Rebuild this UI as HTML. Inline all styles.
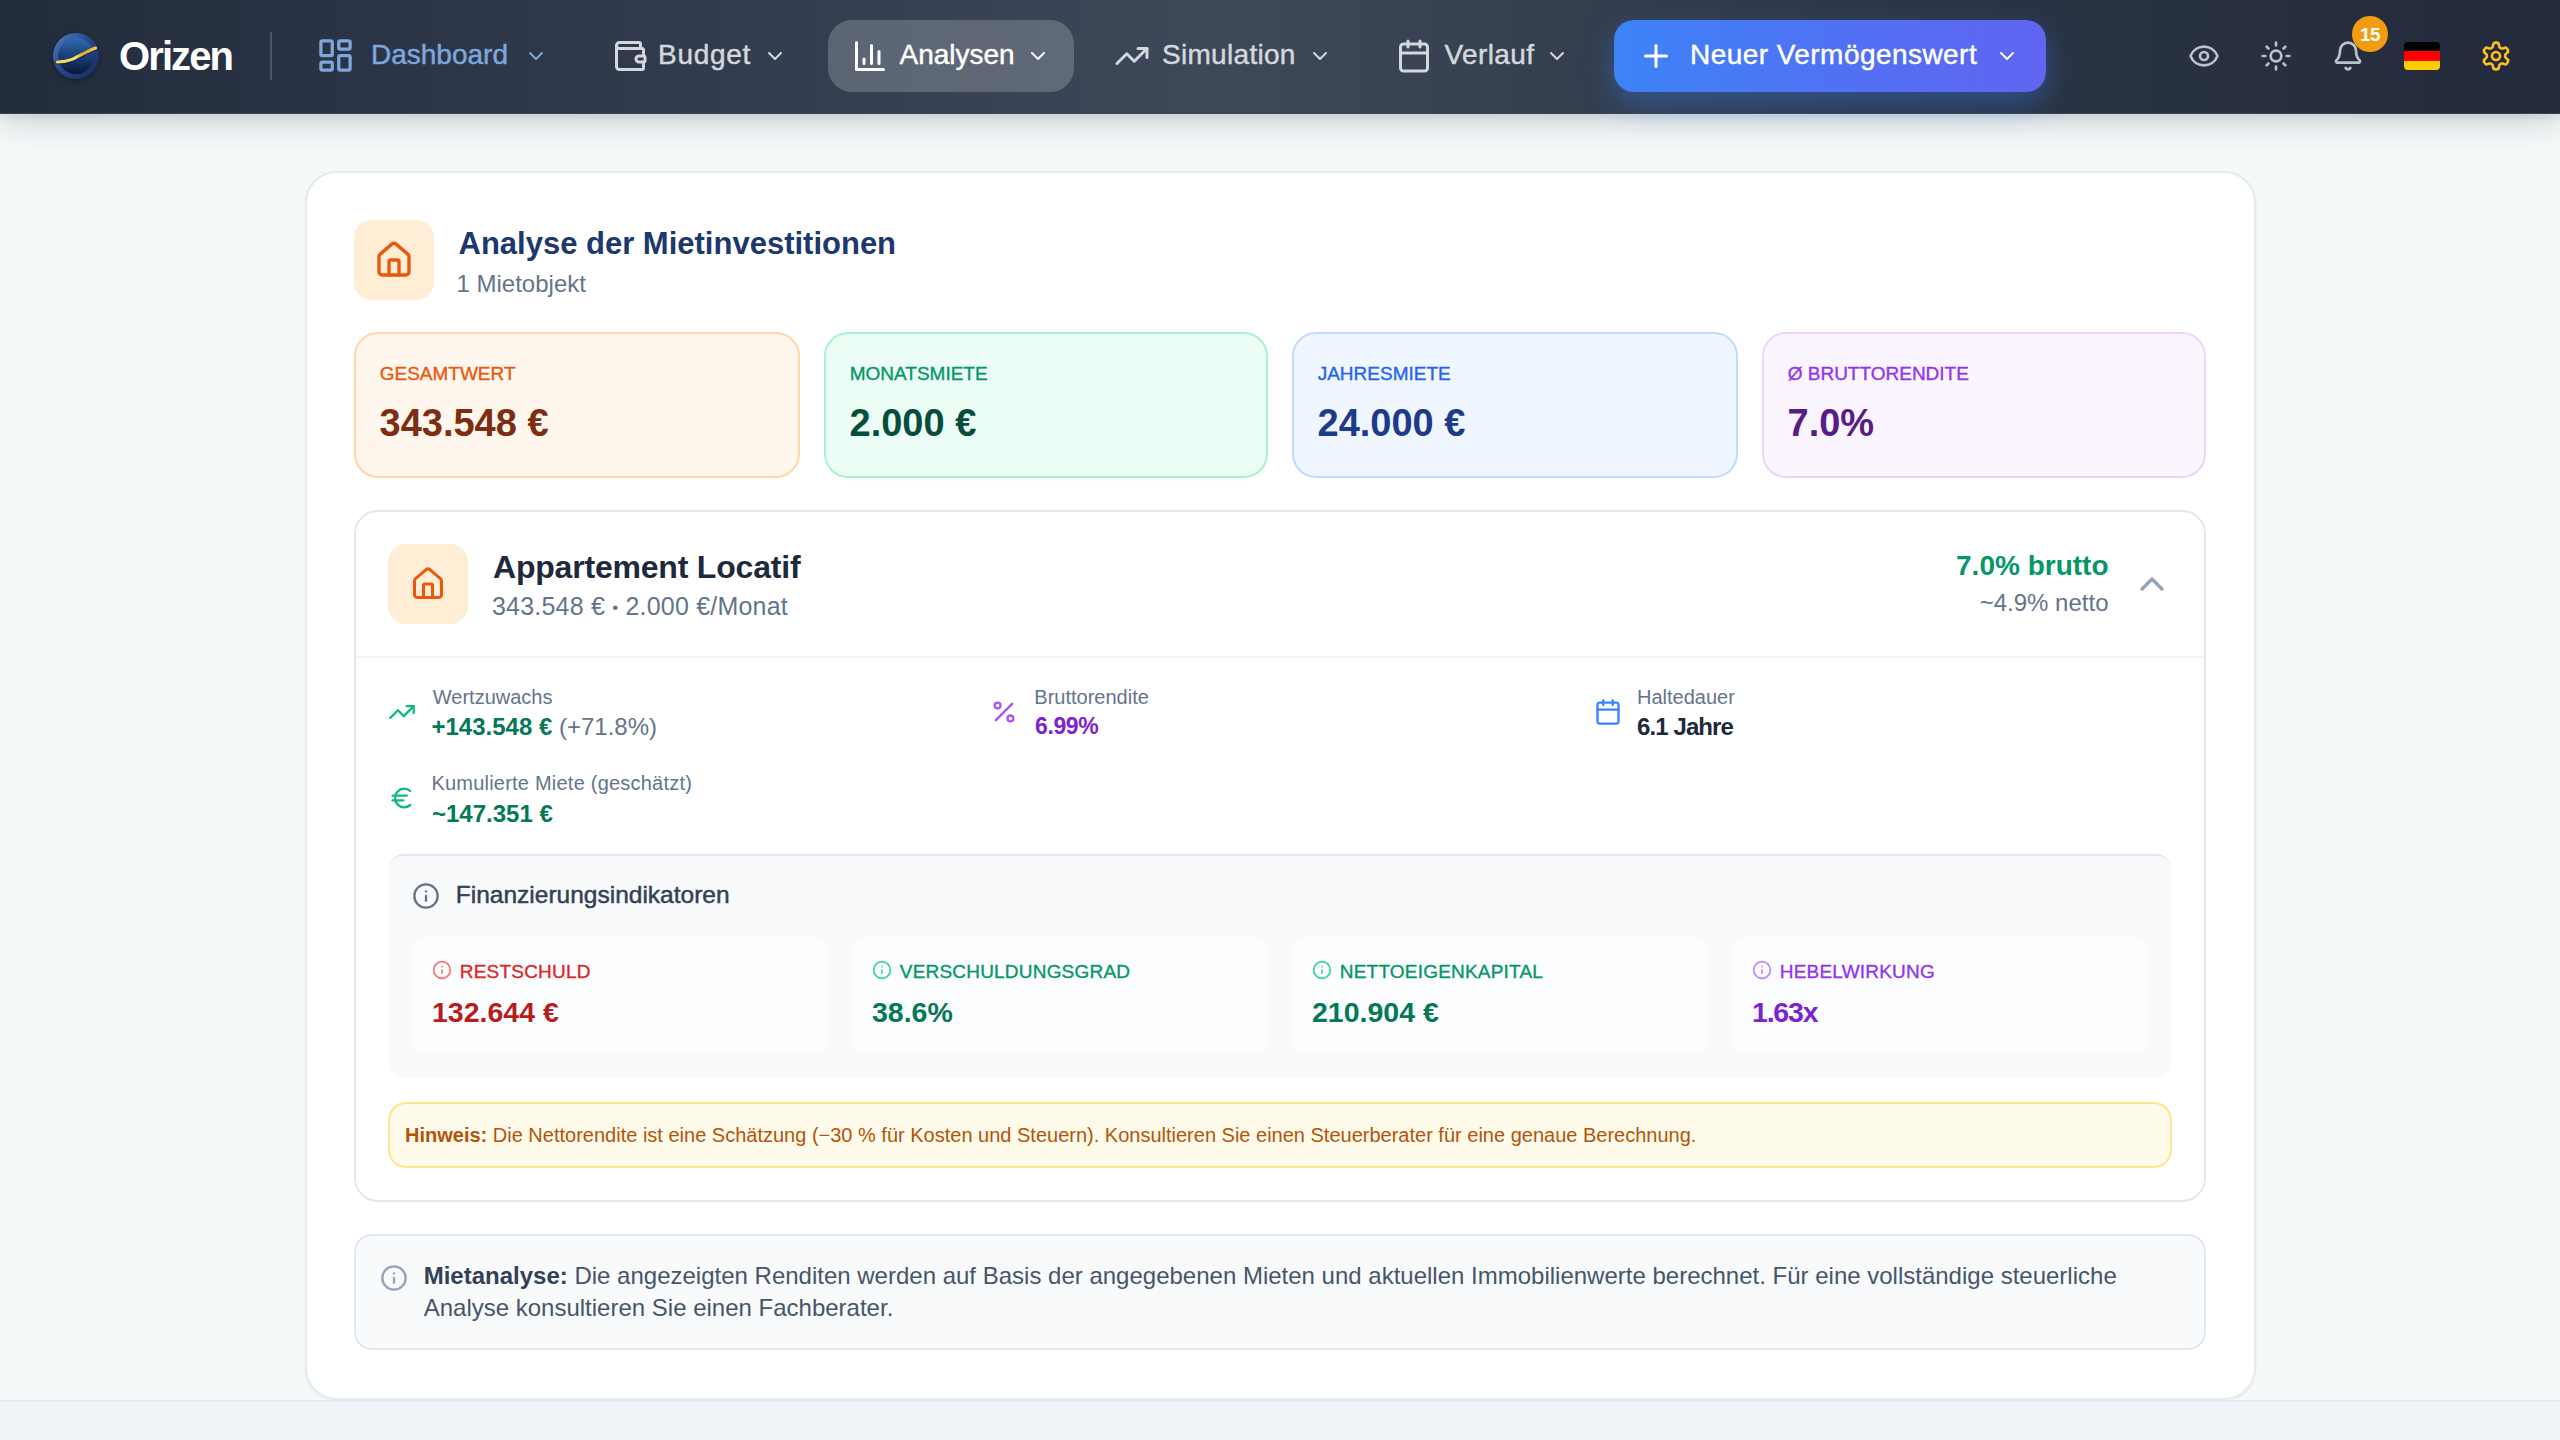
<!DOCTYPE html>
<html lang="de">
<head>
<meta charset="utf-8">
<title>Orizen – Analysen</title>
<style>
*{box-sizing:border-box;margin:0;padding:0}
html,body{width:2560px;height:1440px;overflow:hidden}
body{font-family:"Liberation Sans",sans-serif;background:#f4f9f9;position:relative;color:#1e293b}
svg{display:block}
.abs{position:absolute}
/* NAV */
.nav{position:absolute;left:0;top:0;width:2560px;height:114px;background:linear-gradient(90deg,#232c3d 0%,#323d4f 30%,#3d4859 48%,#2c3546 75%,#222a3b 100%);box-shadow:0 10px 30px rgba(30,41,59,.16),0 4px 8px rgba(30,41,59,.08);z-index:5;border-bottom:1px solid #3b4556}
.logo{position:absolute;left:53px;top:33px;width:46px;height:46px;border-radius:50%;background:radial-gradient(circle at 45% 35%,#2d64b0 0%,#1d4585 40%,#0f2a5c 75%,#0a1f45 100%);box-shadow:0 2px 6px rgba(0,0,0,.35), inset 0 0 0 5px rgba(40,80,150,.55)}
.brand{position:absolute;left:119px;top:30px;font-size:40px;font-weight:700;color:#fff;letter-spacing:-1.9px;line-height:52px}
.vdiv{position:absolute;left:270px;top:32px;width:2px;height:48px;background:#4a5566}
.tx{position:absolute;font-size:28px;line-height:1;white-space:nowrap;color:#d4d8de;-webkit-text-stroke:.45px currentColor}
.pill{background:rgba(255,255,255,.2);border-radius:24px}
.cta{position:absolute;left:1614px;top:20px;width:432px;height:72px;border-radius:20px;background:linear-gradient(90deg,#3d83f6 0%,#5170f3 55%,#6165f1 100%);box-shadow:0 12px 30px rgba(59,130,246,.38)}
.badge{position:absolute;left:2352px;top:16px;width:36px;height:36px;border-radius:50%;background:#f39c12;color:#fff;font-weight:700;font-size:19px;line-height:38.5px;text-align:center;letter-spacing:-.5px}
.flag{position:absolute;left:2404px;top:42px;width:36px;height:28px;border-radius:4px;overflow:hidden;background:linear-gradient(#000 0,#000 33.3%,#f00 33.3%,#f00 66.6%,#ffcc00 66.6%)}
/* MAIN */
.footer{position:absolute;left:0;top:1400px;width:2560px;height:40px;background:#f0f3f8;border-top:2px solid #e2e8f0;z-index:3}
.outer{position:absolute;left:305px;top:171px;width:1951px;height:1229px;background:#fff;border:2px solid #e8eaee;border-radius:32px;box-shadow:0 1px 3px rgba(0,0,0,.05)}

.t{position:absolute;line-height:1;white-space:nowrap}
.b{font-weight:700}
.ibox{position:absolute;background:#ffedd5;border-radius:18px}
.stat{position:absolute;top:332px;width:445px;height:146px;border:2px solid;border-radius:24px}
.lbl{font-size:19px;letter-spacing:0px;-webkit-text-stroke:.35px currentColor}
.val{font-size:38px;font-weight:700}
.prop{position:absolute;left:354px;top:510px;width:1852px;height:692px;border:2px solid #e2e8f0;border-radius:24px;background:#fff}
.hr{position:absolute;left:356px;top:656px;width:1848px;height:2px;background:#f1f5f9}
.sl{font-size:20px;color:#64748b}
.sv{font-size:24px;font-weight:700}
.fin{position:absolute;left:388px;top:854px;width:1784px;height:224px;background:#f8fafc;border-top:2px solid #e2e8f0;border-radius:16px}
.sub{position:absolute;top:936px;width:416px;height:118px;background:#fcfdfe;border-radius:16px}
.hint{position:absolute;left:388px;top:1102px;width:1784px;height:66px;background:#fffbeb;border:2px solid #fde68a;border-radius:18px}
.note{position:absolute;left:354px;top:1234px;width:1852px;height:116px;background:#f8fafc;border:2px solid #e2e8f0;border-radius:18px}
</style>
</head>
<body>
<div class="nav">
  <svg class="abs" style="left:53px;top:33px;filter:drop-shadow(0 2px 3px rgba(0,0,0,.35))" width="46" height="46" viewBox="0 0 46 46">
    <defs>
      <linearGradient id="lgR" x1="0" y1="0" x2="1" y2="1"><stop offset="0" stop-color="#5282c2"/><stop offset=".45" stop-color="#26498c"/><stop offset="1" stop-color="#172a5e"/></linearGradient>
      <linearGradient id="lgI" x1="0" y1="0" x2="0" y2="1"><stop offset="0" stop-color="#2f6bb0"/><stop offset=".5" stop-color="#1a3f7a"/><stop offset="1" stop-color="#0a1837"/></linearGradient>
      <linearGradient id="lgG" x1="0" y1="0" x2="1" y2="0"><stop offset="0" stop-color="#f6d44c"/><stop offset=".45" stop-color="#f7e070"/><stop offset=".7" stop-color="#e2a524"/><stop offset="1" stop-color="#f3cf45"/></linearGradient>
    </defs>
    <circle cx="23" cy="23" r="23" fill="url(#lgR)"/>
    <circle cx="23" cy="23" r="18" fill="url(#lgI)"/>
    <path d="M4.4 29.5 C9 29.5 14 29 19 27 C26 24 34.5 18.5 42.6 15.5" fill="none" stroke="#06122e" stroke-opacity=".5" stroke-width="4.2" stroke-linecap="round"/>
    <path d="M4.4 29 C9 29 14 28.4 19 26.4 C26 23.4 34.5 17.9 42.6 15" fill="none" stroke="url(#lgG)" stroke-width="3.1" stroke-linecap="round"/>
  </svg>
  <div class="brand">Orizen</div>
  <div class="vdiv"></div>

  <!-- Dashboard -->
  <svg class="abs" style="left:316px;top:36.3px" width="39" height="39" viewBox="0 0 24 24" fill="none" stroke="#7ea7dc" stroke-width="2" stroke-linecap="round" stroke-linejoin="round"><rect width="7" height="9" x="3" y="3" rx="1"/><rect width="7" height="5" x="14" y="3" rx="1"/><rect width="7" height="9" x="14" y="12" rx="1"/><rect width="7" height="5" x="3" y="16" rx="1"/></svg>
  <div class="tx" style="left:371px;top:41px;color:#7ea7dc">Dashboard</div>
  <svg class="abs chev" style="left:523.5px;top:43.5px" width="24" height="24" viewBox="0 0 24 24" fill="none" stroke="#7ea7dc" stroke-width="2" stroke-linecap="round" stroke-linejoin="round"><path d="m6 9 6 6 6-6"/></svg>
  <!-- Budget -->
  <svg class="abs" style="left:612px;top:38px" width="36" height="36" viewBox="0 0 24 24" fill="none" stroke="#d4d8de" stroke-width="2" stroke-linecap="round" stroke-linejoin="round"><path d="M19 7V4a1 1 0 0 0-1-1H5a2 2 0 0 0 0 4h15a1 1 0 0 1 1 1v4h-3a2 2 0 0 0 0 4h3a1 1 0 0 0 1-1v-2a1 1 0 0 0-1-1"/><path d="M3 5v14a2 2 0 0 0 2 2h15a1 1 0 0 0 1-1v-4"/></svg>
  <div class="tx" style="left:658px;top:41px;letter-spacing:.7px">Budget</div>
  <svg class="abs chev" style="left:763px;top:43.5px" width="24" height="24" viewBox="0 0 24 24" fill="none" stroke="#d4d8de" stroke-width="2" stroke-linecap="round" stroke-linejoin="round"><path d="m6 9 6 6 6-6"/></svg>
  <!-- Analysen -->
  <div class="abs pill" style="left:828px;top:20px;width:246px;height:72px"></div>
  <svg class="abs" style="left:852px;top:38px" width="36" height="36" viewBox="0 0 24 24" fill="none" stroke="#fff" stroke-width="2" stroke-linecap="round" stroke-linejoin="round"><path d="M3 3v18h18"/><path d="M18 17V9"/><path d="M13 17V5"/><path d="M8 17v-3"/></svg>
  <div class="tx" style="left:899.5px;top:41px;color:#fff">Analysen</div>
  <svg class="abs chev" style="left:1026px;top:43.5px" width="24" height="24" viewBox="0 0 24 24" fill="none" stroke="#fff" stroke-width="2" stroke-linecap="round" stroke-linejoin="round"><path d="m6 9 6 6 6-6"/></svg>
  <!-- Simulation -->
  <svg class="abs" style="left:1114px;top:38px" width="36" height="36" viewBox="0 0 24 24" fill="none" stroke="#d4d8de" stroke-width="2" stroke-linecap="round" stroke-linejoin="round"><path d="M22 7 13.5 15.5 8.5 10.5 2 17"/><path d="M16 7h6v6"/></svg>
  <div class="tx" style="left:1162px;top:41px;letter-spacing:.3px">Simulation</div>
  <svg class="abs chev" style="left:1308px;top:43.5px" width="24" height="24" viewBox="0 0 24 24" fill="none" stroke="#d4d8de" stroke-width="2" stroke-linecap="round" stroke-linejoin="round"><path d="m6 9 6 6 6-6"/></svg>
  <!-- Verlauf -->
  <svg class="abs" style="left:1396px;top:38px" width="36" height="36" viewBox="0 0 24 24" fill="none" stroke="#d4d8de" stroke-width="2" stroke-linecap="round" stroke-linejoin="round"><path d="M8 2v4"/><path d="M16 2v4"/><rect width="18" height="18" x="3" y="4" rx="2"/><path d="M3 10h18"/></svg>
  <div class="tx" style="left:1444.5px;top:41px;letter-spacing:.4px">Verlauf</div>
  <svg class="abs chev" style="left:1545px;top:43.5px" width="24" height="24" viewBox="0 0 24 24" fill="none" stroke="#d4d8de" stroke-width="2" stroke-linecap="round" stroke-linejoin="round"><path d="m6 9 6 6 6-6"/></svg>
  <!-- CTA -->
  <div class="cta"></div>
  <svg class="abs" style="left:1638px;top:38px" width="36" height="36" viewBox="0 0 24 24" fill="none" stroke="#fff" stroke-width="2" stroke-linecap="round" stroke-linejoin="round"><path d="M5 12h14"/><path d="M12 5v14"/></svg>
  <div class="tx" style="left:1690px;top:41px;color:#fff;letter-spacing:.45px">Neuer Vermögenswert</div>
  <svg class="abs chev" style="left:1995px;top:43.5px" width="24" height="24" viewBox="0 0 24 24" fill="none" stroke="#fff" stroke-width="2" stroke-linecap="round" stroke-linejoin="round"><path d="m6 9 6 6 6-6"/></svg>
  <!-- right icons -->
  <svg class="abs" style="left:2188px;top:40px" width="32" height="32" viewBox="0 0 24 24" fill="none" stroke="#bcc2cb" stroke-width="2" stroke-linecap="round" stroke-linejoin="round"><path d="M2.062 12.348a1 1 0 0 1 0-.696 10.75 10.75 0 0 1 19.876 0 1 1 0 0 1 0 .696 10.75 10.75 0 0 1-19.876 0"/><circle cx="12" cy="12" r="3"/></svg>
  <svg class="abs" style="left:2260px;top:40px" width="32" height="32" viewBox="0 0 24 24" fill="none" stroke="#bcc2cb" stroke-width="2" stroke-linecap="round" stroke-linejoin="round"><circle cx="12" cy="12" r="4"/><path d="M12 2v2"/><path d="M12 20v2"/><path d="m4.93 4.93 1.41 1.41"/><path d="m17.66 17.66 1.41 1.41"/><path d="M2 12h2"/><path d="M20 12h2"/><path d="m6.34 17.66-1.41 1.41"/><path d="m19.07 4.93-1.41 1.41"/></svg>
  <svg class="abs" style="left:2332px;top:40px" width="32" height="32" viewBox="0 0 24 24" fill="none" stroke="#bcc2cb" stroke-width="2" stroke-linecap="round" stroke-linejoin="round"><path d="M10.268 21a2 2 0 0 0 3.464 0"/><path d="M3.262 15.326A1 1 0 0 0 4 17h16a1 1 0 0 0 .74-1.673C19.41 13.956 18 12.499 18 8A6 6 0 0 0 6 8c0 4.499-1.411 5.956-2.738 7.326"/></svg>
  <div class="badge">15</div>
  <div class="flag"></div>
  <svg class="abs" style="left:2480px;top:40px" width="32" height="32" viewBox="0 0 24 24" fill="none" stroke="#fbbf24" stroke-width="2" stroke-linecap="round" stroke-linejoin="round"><path d="M12.22 2h-.44a2 2 0 0 0-2 2v.18a2 2 0 0 1-1 1.73l-.43.25a2 2 0 0 1-2 0l-.15-.08a2 2 0 0 0-2.73.73l-.22.38a2 2 0 0 0 .73 2.73l.15.1a2 2 0 0 1 1 1.72v.51a2 2 0 0 1-1 1.74l-.15.09a2 2 0 0 0-.73 2.73l.22.38a2 2 0 0 0 2.73.73l.15-.08a2 2 0 0 1 2 0l.43.25a2 2 0 0 1 1 1.73V20a2 2 0 0 0 2 2h.44a2 2 0 0 0 2-2v-.18a2 2 0 0 1 1-1.73l.43-.25a2 2 0 0 1 2 0l.15.08a2 2 0 0 0 2.73-.73l.22-.39a2 2 0 0 0-.73-2.73l-.15-.08a2 2 0 0 1-1-1.74v-.5a2 2 0 0 1 1-1.74l.15-.09a2 2 0 0 0 .73-2.73l-.22-.38a2 2 0 0 0-2.73-.73l-.15.08a2 2 0 0 1-2 0l-.43-.25a2 2 0 0 1-1-1.73V4a2 2 0 0 0-2-2z"/><circle cx="12" cy="12" r="3"/></svg>
</div>

<div class="outer"></div>
<!-- header -->
<div class="ibox" style="left:354px;top:220px;width:80px;height:80px"></div>
<svg class="abs" style="left:374px;top:240px" width="40" height="40" viewBox="0 0 24 24" fill="none" stroke="#ea580c" stroke-width="2" stroke-linecap="round" stroke-linejoin="round"><path d="M15 21v-8a1 1 0 0 0-1-1h-4a1 1 0 0 0-1 1v8"/><path d="M3 10a2 2 0 0 1 .709-1.528l7-5.999a2 2 0 0 1 2.582 0l7 5.999A2 2 0 0 1 21 10v9a2 2 0 0 1-2 2H5a2 2 0 0 1-2-2z"/></svg>
<div class="t b" style="left:458.5px;top:228.2px;font-size:31px;color:#1c386c">Analyse der Mietinvestitionen</div>
<div class="t" style="left:456.5px;top:271.5px;font-size:24px;color:#64748b">1 Mietobjekt</div>
<!-- stats -->
<div class="stat" style="left:354px;width:446px;background:#fff7ed;border-color:#fed7aa"></div>
<div class="t lbl" style="left:379.7px;top:363.5px;color:#ea580c">GESAMTWERT</div>
<div class="t val" style="left:379.5px;top:404.4px;color:#7c2d12">343.548 €</div>
<div class="stat" style="left:824px;width:444px;background:#ecfdf5;border-color:#a7f3d0"></div>
<div class="t lbl" style="left:849.7px;top:363.5px;color:#059669">MONATSMIETE</div>
<div class="t val" style="left:849.5px;top:404.4px;color:#064e3b">2.000 €</div>
<div class="stat" style="left:1292px;width:446px;background:#eff6ff;border-color:#bfdbfe"></div>
<div class="t lbl" style="left:1317.7px;top:363.5px;color:#2563eb">JAHRESMIETE</div>
<div class="t val" style="left:1317.5px;top:404.4px;color:#1e3a8a">24.000 €</div>
<div class="stat" style="left:1762px;width:444px;background:#faf5ff;border-color:#e9d5ff"></div>
<div class="t lbl" style="left:1787.7px;top:363.5px;color:#9333ea">Ø BRUTTORENDITE</div>
<div class="t val" style="left:1787.5px;top:404.4px;color:#581c87">7.0%</div>
<!-- property card -->
<div class="prop"></div>
<div class="ibox" style="left:388px;top:544px;width:80px;height:80px"></div>
<svg class="abs" style="left:410px;top:566px" width="36" height="36" viewBox="0 0 24 24" fill="none" stroke="#ea580c" stroke-width="2" stroke-linecap="round" stroke-linejoin="round"><path d="M15 21v-8a1 1 0 0 0-1-1h-4a1 1 0 0 0-1 1v8"/><path d="M3 10a2 2 0 0 1 .709-1.528l7-5.999a2 2 0 0 1 2.582 0l7 5.999A2 2 0 0 1 21 10v9a2 2 0 0 1-2 2H5a2 2 0 0 1-2-2z"/></svg>
<div class="t b" style="left:493px;top:551px;font-size:32px;color:#1e293b;letter-spacing:-.2px">Appartement Locatif</div>
<div class="t" style="left:492px;top:594.4px;font-size:25px;letter-spacing:.2px;color:#64748b">343.548 € <span style="font-size:17px;position:relative;top:-2px">•</span> 2.000 €/Monat</div>
<div class="t b" style="right:451.5px;top:552.3px;font-size:28px;color:#059669">7.0% brutto</div>
<div class="t" style="right:451.5px;top:591.3px;font-size:24px;color:#64748b">~4.9% netto</div>
<svg class="abs" style="left:2132px;top:564px" width="40" height="40" viewBox="0 0 24 24" fill="none" stroke="#94a3b8" stroke-width="2" stroke-linecap="round" stroke-linejoin="round"><path d="m18 15-6-6-6 6"/></svg>
<div class="hr"></div>
<!-- details -->
<svg class="abs" style="left:388px;top:698px" width="28" height="28" viewBox="0 0 24 24" fill="none" stroke="#10b981" stroke-width="2" stroke-linecap="round" stroke-linejoin="round"><path d="M22 7 13.5 15.5 8.5 10.5 2 17"/><path d="M16 7h6v6"/></svg>
<div class="t sl" style="left:432.8px;top:686.8px">Wertzuwachs</div>
<div class="t sv" style="left:431.5px;top:715.3px;color:#047857">+143.548 € <span style="font-weight:400;color:#64748b">(+71.8%)</span></div>
<svg class="abs" style="left:990px;top:698px" width="28" height="28" viewBox="0 0 24 24" fill="none" stroke="#a855f7" stroke-width="2" stroke-linecap="round" stroke-linejoin="round"><line x1="19" x2="5" y1="5" y2="19"/><circle cx="6.5" cy="6.5" r="2.5"/><circle cx="17.5" cy="17.5" r="2.5"/></svg>
<div class="t sl" style="left:1034.3px;top:686.8px">Bruttorendite</div>
<div class="t sv" style="left:1035px;top:715.3px;color:#7e22ce;font-size:23px;letter-spacing:-.4px">6.99%</div>
<svg class="abs" style="left:1594px;top:698px" width="28" height="28" viewBox="0 0 24 24" fill="none" stroke="#3b82f6" stroke-width="2" stroke-linecap="round" stroke-linejoin="round"><path d="M8 2v4"/><path d="M16 2v4"/><rect width="18" height="18" x="3" y="4" rx="2"/><path d="M3 10h18"/></svg>
<div class="t sl" style="left:1637px;top:686.8px">Haltedauer</div>
<div class="t sv" style="left:1637px;top:715.3px;color:#1e293b;letter-spacing:-.9px">6.1 Jahre</div>
<svg class="abs" style="left:388px;top:784px" width="28" height="28" viewBox="0 0 24 24" fill="none" stroke="#10b981" stroke-width="2" stroke-linecap="round" stroke-linejoin="round"><path d="M4 10h12"/><path d="M4 14h9"/><path d="M19 6a7.7 7.7 0 0 0-5.2-2A7.9 7.9 0 0 0 6 12c0 4.4 3.5 8 7.8 8 2 0 3.8-.8 5.2-2"/></svg>
<div class="t sl" style="left:431.4px;top:773.1px;letter-spacing:.22px">Kumulierte Miete (geschätzt)</div>
<div class="t sv" style="left:432px;top:801.6px;color:#047857">~147.351 €</div>
<!-- financing -->
<div class="fin"></div>
<svg class="abs" style="left:412px;top:882px" width="28" height="28" viewBox="0 0 24 24" fill="none" stroke="#64748b" stroke-width="2" stroke-linecap="round" stroke-linejoin="round"><circle cx="12" cy="12" r="10"/><path d="M12 16v-4"/><path d="M12 8h.01"/></svg>
<div class="t" style="left:455.8px;top:883.2px;font-size:24.5px;color:#334155;-webkit-text-stroke:.5px currentColor">Finanzierungsindikatoren</div>
<div class="sub" style="left:412px"></div>
<svg class="abs" style="left:432px;top:960px" width="20" height="20" viewBox="0 0 24 24" fill="none" stroke="#f87171" stroke-width="2" stroke-linecap="round" stroke-linejoin="round"><circle cx="12" cy="12" r="10"/><path d="M12 16v-4"/><path d="M12 8h.01"/></svg>
<div class="t lbl" style="letter-spacing:.2px;left:459.8px;top:961.9px;color:#dc2626">RESTSCHULD</div>
<div class="t b" style="left:432px;top:997.8px;font-size:28.5px;color:#b91c1c">132.644 €</div>
<div class="sub" style="left:852px"></div>
<svg class="abs" style="left:872px;top:960px" width="20" height="20" viewBox="0 0 24 24" fill="none" stroke="#34d399" stroke-width="2" stroke-linecap="round" stroke-linejoin="round"><circle cx="12" cy="12" r="10"/><path d="M12 16v-4"/><path d="M12 8h.01"/></svg>
<div class="t lbl" style="letter-spacing:.2px;left:899.8px;top:961.9px;color:#059669">VERSCHULDUNGSGRAD</div>
<div class="t b" style="left:872px;top:997.8px;font-size:28.5px;color:#047857">38.6%</div>
<div class="sub" style="left:1292px"></div>
<svg class="abs" style="left:1312px;top:960px" width="20" height="20" viewBox="0 0 24 24" fill="none" stroke="#34d399" stroke-width="2" stroke-linecap="round" stroke-linejoin="round"><circle cx="12" cy="12" r="10"/><path d="M12 16v-4"/><path d="M12 8h.01"/></svg>
<div class="t lbl" style="letter-spacing:.2px;left:1339.8px;top:961.9px;color:#059669">NETTOEIGENKAPITAL</div>
<div class="t b" style="left:1312px;top:997.8px;font-size:28.5px;color:#047857">210.904 €</div>
<div class="sub" style="left:1732px"></div>
<svg class="abs" style="left:1752px;top:960px" width="20" height="20" viewBox="0 0 24 24" fill="none" stroke="#c084fc" stroke-width="2" stroke-linecap="round" stroke-linejoin="round"><circle cx="12" cy="12" r="10"/><path d="M12 16v-4"/><path d="M12 8h.01"/></svg>
<div class="t lbl" style="letter-spacing:.2px;left:1779.8px;top:961.9px;color:#9333ea">HEBELWIRKUNG</div>
<div class="t b" style="left:1752px;top:997.8px;font-size:28.5px;color:#7e22ce;letter-spacing:-1.2px">1.63x</div>

<!-- hint -->
<div class="hint"></div>
<div class="t" style="left:405px;top:1124.9px;font-size:20px;color:#b45309"><b>Hinweis:</b> Die Nettorendite ist eine Schätzung (−30 % für Kosten und Steuern). Konsultieren Sie einen Steuerberater für eine genaue Berechnung.</div>
<!-- note -->
<div class="note"></div>
<svg class="abs" style="left:380px;top:1264px" width="28" height="28" viewBox="0 0 24 24" fill="none" stroke="#94a3b8" stroke-width="2" stroke-linecap="round" stroke-linejoin="round"><circle cx="12" cy="12" r="10"/><path d="M12 16v-4"/><path d="M12 8h.01"/></svg>
<div class="abs" style="left:423.7px;top:1259.5px;font-size:24px;line-height:32px;color:#475569;white-space:nowrap"><b style="color:#334155">Mietanalyse:</b> Die angezeigten Renditen werden auf Basis der angegebenen Mieten und aktuellen Immobilienwerte berechnet. Für eine vollständige steuerliche<br>Analyse konsultieren Sie einen Fachberater.</div>
<div class="footer"></div>
</body>
</html>
